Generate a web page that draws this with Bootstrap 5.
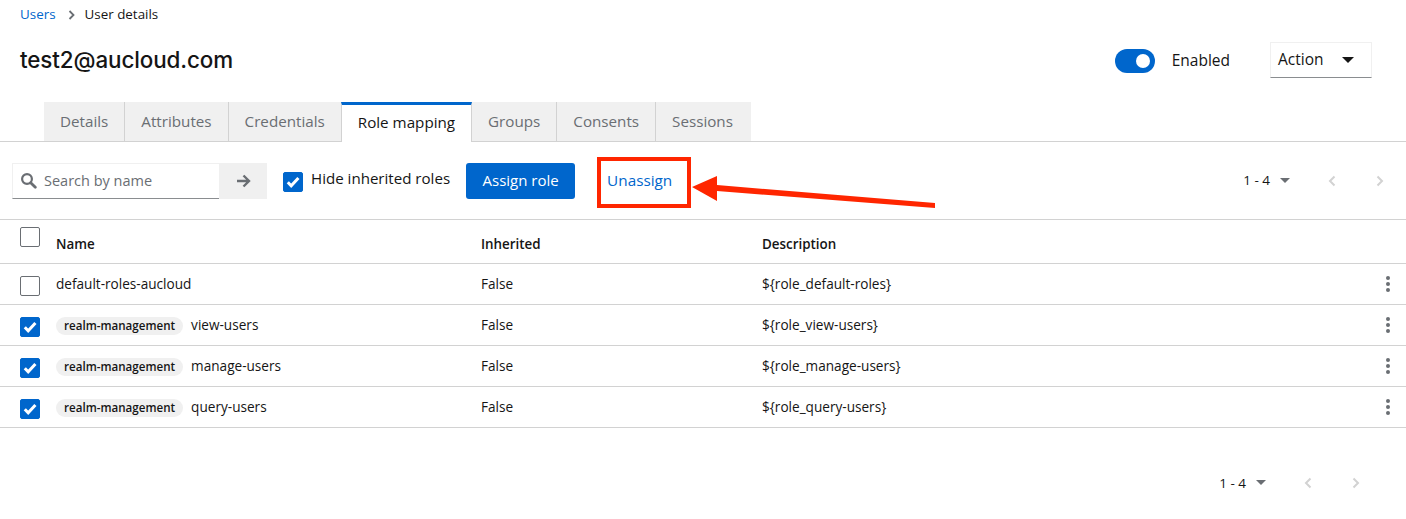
<!DOCTYPE html>
<html lang="en">
<head>
  <meta charset="UTF-8">
  <meta name="viewport" content="width=device-width, initial-scale=1.0">
  <title>User details</title>
  <link href="https://cdn.jsdelivr.net/npm/bootstrap@5.3.0/dist/css/bootstrap.min.css" rel="stylesheet">
  <style>
    body { font-family: "Open Sans", "Liberation Sans", sans-serif; color: #151515; font-size: 14px; position: relative; height: 519px; overflow: hidden; background: #fff; }
    a { text-decoration: none; color: #0066cc; }
    .crumbs { height: 29px; padding-left: 20px; font-size: 13.4px; }
    .crumbs svg { margin: 0 10px 0 12px; }
    .head-row { height: 73px; padding: 0 34px 9px 20px; }
    .user-title { font-family: "Inter", sans-serif; font-size: 22.4px; font-weight: 500; margin: 0; letter-spacing: -0.1px; position: relative; top: -1px; }
    .toggle-pill { width: 40px; height: 24px; border-radius: 12px; background: #0066cc; padding: 5px; justify-content: flex-end; margin-right: 17px; }
    .toggle-pill i { display: block; width: 14px; height: 14px; border-radius: 50%; background: #fff; }
    .enabled-lbl { font-size: 15.5px; margin-right: 40px; color: #151515; }
    .action-box { width: 102px; height: 36px; border: 1px solid #f0f0f0; border-bottom: 1px solid #8a8d90; padding: 0 17px 0 7px; font-size: 15.5px; background: #fff; margin-top: -3px; }
    .caret-dn { width: 0; height: 0; border-left: 6px solid transparent; border-right: 6px solid transparent; border-top: 6px solid #151515; }
    .tab-strip { height: 40px; padding-left: 44px; border-bottom: 1px solid #d2d2d2; }
    .tab-item { height: 39px; padding: 0 16px; background: #f0f0f0; border-right: 1px solid #d2d2d2; color: #6a6e73; font-size: 15.2px; }
    .tab-item:last-child { border-right: 0; padding-right: 18px; }
    .tab-item.on { background: #fff; color: #151515; border-top: 3px solid #0066cc; border-left: 1px solid #d2d2d2; height: 40px; margin-bottom: -1px; margin-left: -1px; padding-bottom: 2px; z-index: 1; }
    .tool-row { height: 78px; padding: 0 0 0 12px; border-bottom: 1px solid #d2d2d2; }
    .search-wrap { width: 207px; height: 36px; border: 1px solid #f0f0f0; border-bottom: 1px solid #8a8d90; border-right: 0; padding-left: 7px; color: #6a6e73; font-size: 14.5px; gap: 7px; }
    .search-go { width: 48px; height: 36px; background: #f0f0f0; margin-right: 16px; }
    .tick { width: 20px; height: 20px; border-radius: 2px; border: 1px solid #6a6e73; background: #fff; flex: none; }
    .tick.on { background: #0066cc; border-color: #0066cc; }
    .tool-row > .tick { position: relative; top: 1px; }
    .hide-lbl { font-size: 15.1px; margin-left: 8px; margin-right: 16px; position: relative; top: -2px; }
    .btn-assign { background: #0066cc; color: #fff; border: 0; border-radius: 3px; height: 36px; width: 109px; padding: 0; font-size: 15px; font-weight: 500; }
    .btn-assign:hover { background: #0066cc; color: #fff; }
    .unassign-link { margin-left: 32px; font-size: 15.3px; }
    .pager { gap: 0; font-size: 13.5px; font-weight: 500; }
    .pager .count { margin-right: 10px; }
    .caret-sm { width: 0; height: 0; border-left: 5px solid transparent; border-right: 5px solid transparent; border-top: 5px solid #6a6e73; margin-right: 38px; }
    .pager svg + svg { margin-left: 40px; }
    .pager-top { margin-left: auto; padding-right: 22px; }
    .pager-bottom { padding: 45px 46px 0 0; justify-content: flex-end; }
    .roles-tbl { table-layout: fixed; width: 100%; margin: 0; font-size: 13.6px; }
    .roles-tbl th, .roles-tbl td { padding: 0; vertical-align: middle; border-bottom: 1px solid #d2d2d2; color: #151515; background: transparent; }
    .roles-tbl td { padding-top: 2px; }
    .roles-tbl thead tr { height: 43px; }
    .roles-tbl tbody tr { height: 41px; }
    .roles-tbl th { font-weight: 600; font-size: 13.4px; }
    .roles-tbl th span { position: relative; top: 3px; }
    .roles-tbl .tick { margin-left: 20px; position: relative; top: 1px; }
    .roles-tbl thead .tick { top: -4px; }
    .pill-tag { display: inline-block; background: #f0f0f0; border-radius: 30px; font-size: 11.6px; font-weight: 600; line-height: 18px; padding: 0 8px; margin-right: 8px; }
    .roles-tbl td.kebab { text-align: right; padding: 0 16px 2px 0; }
    .kebab svg { display: inline-block; vertical-align: middle; }
    .anno-box { position: absolute; left: 597px; top: 157px; width: 94px; height: 51px; border: 4px solid #ff2600; }
    .anno-arrow { position: absolute; left: 690px; top: 170px; }
  </style>
</head>
<body>
  <nav class="crumbs d-flex align-items-center">
    <a href="#">Users</a>
    <svg width="7" height="10" viewBox="0 0 7 10"><path d="M1.5 1l4 4-4 4" fill="none" stroke="#6a6e73" stroke-width="1.8"/></svg>
    <span>User details</span>
  </nav>

  <div class="head-row d-flex align-items-center">
    <h1 class="user-title">test2@aucloud.com</h1>
    <div class="ms-auto d-flex align-items-center">
      <span class="toggle-pill d-flex align-items-center"><i></i></span>
      <span class="enabled-lbl">Enabled</span>
      <div class="action-box d-flex align-items-center justify-content-between"><span>Action</span><span class="caret-dn"></span></div>
    </div>
  </div>

  <div class="tab-strip d-flex">
    <a class="tab-item d-flex align-items-center" href="#">Details</a>
    <a class="tab-item d-flex align-items-center" href="#">Attributes</a>
    <a class="tab-item d-flex align-items-center" href="#">Credentials</a>
    <a class="tab-item on d-flex align-items-center" href="#">Role mapping</a>
    <a class="tab-item d-flex align-items-center" href="#">Groups</a>
    <a class="tab-item d-flex align-items-center" href="#">Consents</a>
    <a class="tab-item d-flex align-items-center" href="#">Sessions</a>
  </div>

  <div class="tool-row d-flex align-items-center">
    <div class="search-wrap d-flex align-items-center">
      <svg width="17" height="17" viewBox="0 0 17 17"><circle cx="7" cy="7" r="4.9" fill="none" stroke="#6a6e73" stroke-width="2.2"/><path d="M10.7 10.7l4.6 4.6" stroke="#6a6e73" stroke-width="2.8" stroke-linecap="round"/></svg>
      <span>Search by name</span>
    </div>
    <div class="search-go d-flex align-items-center justify-content-center">
      <svg width="15" height="14" viewBox="0 0 15 14"><path d="M1 7h12M7.500 1.500L13 7l-5.500 5.500" fill="none" stroke="#6a6e73" stroke-width="2.4"/></svg>
    </div>
    <span class="tick on d-flex align-items-center justify-content-center"><svg width="14" height="12" viewBox="0 0 14 12"><path d="M1.800 6.200l3.400 3.600L12.400 2" fill="none" stroke="#fff" stroke-width="3"/></svg></span>
    <span class="hide-lbl">Hide inherited roles</span>
    <button class="btn btn-assign" type="button">Assign role</button>
    <a class="unassign-link" href="#">Unassign</a>
    <div class="pager pager-top d-flex align-items-center">
      <span class="count">1 - 4</span><span class="caret-sm"></span>
      <svg width="8" height="12" viewBox="0 0 8 12"><path d="M6.500 1.500L2 6l4.500 4.500" fill="none" stroke="#d2d2d2" stroke-width="2"/></svg>
      <svg width="8" height="12" viewBox="0 0 8 12"><path d="M1.500 1.500L6 6l-4.500 4.500" fill="none" stroke="#d2d2d2" stroke-width="2"/></svg>
    </div>
  </div>

  <table class="table roles-tbl">
    <colgroup><col style="width:56px"><col style="width:425px"><col style="width:281px"><col><col style="width:60px"></colgroup>
    <thead>
      <tr><th><span class="tick d-block"></span></th><th><span>Name</span></th><th><span>Inherited</span></th><th><span>Description</span></th><th></th></tr>
    </thead>
    <tbody>
      <tr>
        <td><span class="tick d-block"></span></td>
        <td>default-roles-aucloud</td><td>False</td><td>${role_default-roles}</td>
        <td class="kebab"><svg width="4" height="16" viewBox="0 0 4 16" fill="#6a6e73"><circle cx="2" cy="2" r="2"/><circle cx="2" cy="8" r="2"/><circle cx="2" cy="14" r="2"/></svg></td>
      </tr>
      <tr>
        <td><span class="tick on d-flex align-items-center justify-content-center"><svg width="14" height="12" viewBox="0 0 14 12"><path d="M1.800 6.200l3.400 3.600L12.400 2" fill="none" stroke="#fff" stroke-width="3"/></svg></span></td>
        <td><span class="pill-tag">realm-management</span>view-users</td><td>False</td><td>${role_view-users}</td>
        <td class="kebab"><svg width="4" height="16" viewBox="0 0 4 16" fill="#6a6e73"><circle cx="2" cy="2" r="2"/><circle cx="2" cy="8" r="2"/><circle cx="2" cy="14" r="2"/></svg></td>
      </tr>
      <tr>
        <td><span class="tick on d-flex align-items-center justify-content-center"><svg width="14" height="12" viewBox="0 0 14 12"><path d="M1.800 6.200l3.400 3.600L12.400 2" fill="none" stroke="#fff" stroke-width="3"/></svg></span></td>
        <td><span class="pill-tag">realm-management</span>manage-users</td><td>False</td><td>${role_manage-users}</td>
        <td class="kebab"><svg width="4" height="16" viewBox="0 0 4 16" fill="#6a6e73"><circle cx="2" cy="2" r="2"/><circle cx="2" cy="8" r="2"/><circle cx="2" cy="14" r="2"/></svg></td>
      </tr>
      <tr>
        <td><span class="tick on d-flex align-items-center justify-content-center"><svg width="14" height="12" viewBox="0 0 14 12"><path d="M1.800 6.200l3.400 3.600L12.400 2" fill="none" stroke="#fff" stroke-width="3"/></svg></span></td>
        <td><span class="pill-tag">realm-management</span>query-users</td><td>False</td><td>${role_query-users}</td>
        <td class="kebab"><svg width="4" height="16" viewBox="0 0 4 16" fill="#6a6e73"><circle cx="2" cy="2" r="2"/><circle cx="2" cy="8" r="2"/><circle cx="2" cy="14" r="2"/></svg></td>
      </tr>
    </tbody>
  </table>

  <div class="pager pager-bottom d-flex align-items-center">
    <span class="count">1 - 4</span><span class="caret-sm"></span>
    <svg width="8" height="12" viewBox="0 0 8 12"><path d="M6.500 1.500L2 6l4.500 4.500" fill="none" stroke="#d2d2d2" stroke-width="2"/></svg>
    <svg width="8" height="12" viewBox="0 0 8 12"><path d="M1.500 1.500L6 6l-4.500 4.500" fill="none" stroke="#d2d2d2" stroke-width="2"/></svg>
  </div>

  <!-- annotation drawn over the screenshot -->
  <div class="anno-box"></div>
  <svg class="anno-arrow" width="250" height="40" viewBox="0 0 250 40"><path d="M2 17L27 6v9l218 18v5L27 21v10z" fill="#ff2600"/></svg>

  <script src="https://cdn.jsdelivr.net/npm/bootstrap@5.3.0/dist/js/bootstrap.bundle.min.js"></script>
</body>
</html>
